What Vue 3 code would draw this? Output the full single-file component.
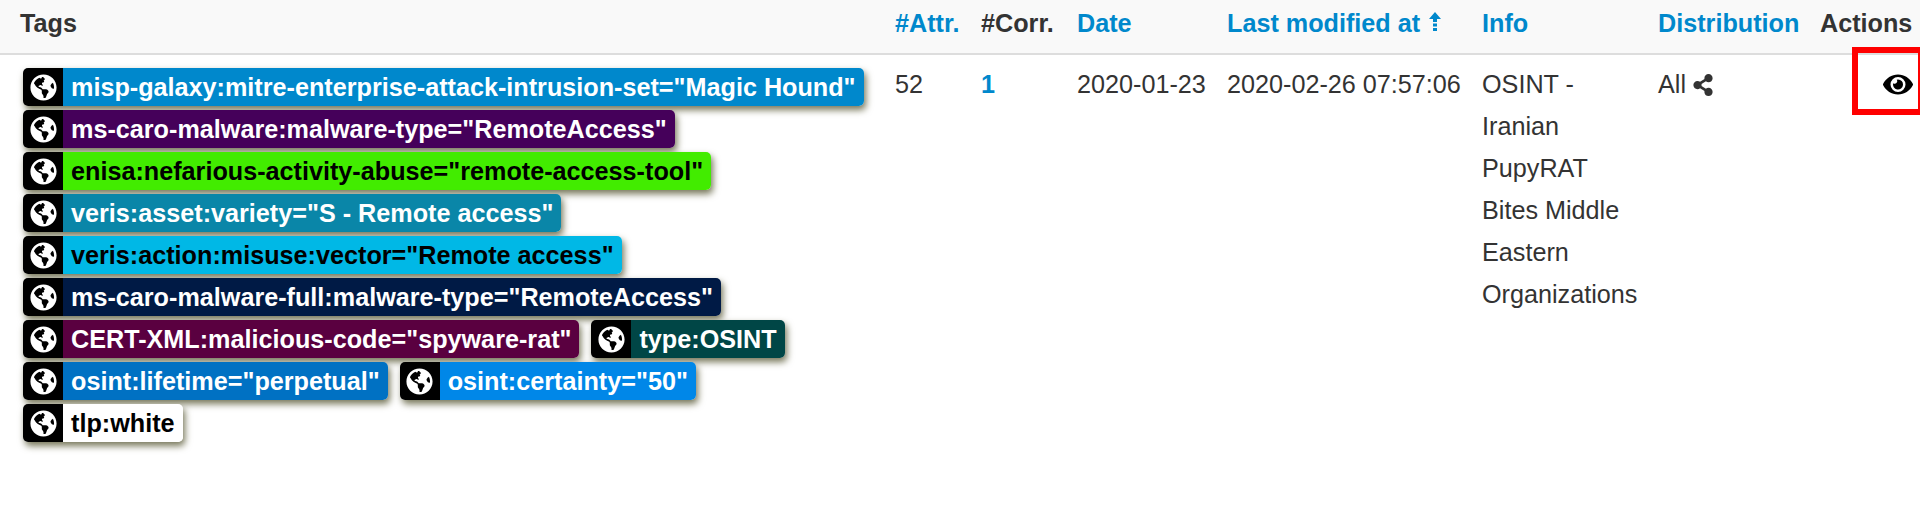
<template>
  <div class="page">
    <table class="events">
      <colgroup>
        <col class="col-tags" />
        <col class="col-attr" />
        <col class="col-corr" />
        <col class="col-date" />
        <col class="col-mod" />
        <col class="col-info" />
        <col class="col-dist" />
        <col class="col-actions" />
      </colgroup>
      <thead>
        <tr>
          <th>Tags</th>
          <th class="link">#Attr.</th>
          <th>#Corr.</th>
          <th class="link">Date</th>
          <th class="link">
            Last modified at
            <svg class="sort" viewBox="0 0 12 20"><path d="M6 0 12 7H8V10H4V7H0ZM4 11.5H8V14.5H4ZM4 16H8V19H4Z" /></svg>
          </th>
          <th class="link">Info</th>
          <th class="link">Distribution</th>
          <th>Actions</th>
        </tr>
      </thead>
      <tbody>
        <tr>
          <td class="tags-cell">
            <div v-for="(row, i) in tagRows" :key="i" class="tag-row">
              <span v-for="tag in row" :key="tag.text" class="tag">
                <span class="tag-icon">
                  <svg viewBox="0 0 496 512"><path :d="globe" /></svg>
                </span>
                <span class="tag-text" :style="{ background: tag.bg, color: tag.fg }">{{ tag.text }}</span>
              </span>
            </div>
          </td>
          <td>52</td>
          <td class="corr">1</td>
          <td>2020-01-23</td>
          <td>2020-02-26 07:57:06</td>
          <td>OSINT - Iranian PupyRAT Bites Middle Eastern Organizations</td>
          <td>
            All
            <svg class="share" viewBox="0 0 448 512"><path :d="share" /></svg>
          </td>
          <td class="actions">
            <svg class="eye" viewBox="0 0 576 512"><path :d="eye" /></svg>
          </td>
        </tr>
      </tbody>
    </table>
    <div class="highlight"></div>
  </div>
</template>

<script setup>
const globe =
  "M248 8C111.03 8 0 119.03 0 256s111.03 248 248 248 248-111.03 248-248S384.97 8 248 8zm82.29 357.6c-3.9 3.88-7.99 7.95-11.31 11.28-2.99 3-5.1 6.7-6.17 10.71-1.51 5.66-2.73 11.38-4.77 16.87l-17.39 46.85c-13.76 3-28 4.69-42.65 4.69v-27.38c1.69-12.62-7.64-36.26-22.63-51.25-6-6-9.37-14.14-9.37-22.63v-32.01c0-11.64-6.27-22.34-16.46-27.97-14.37-7.95-34.81-19.06-48.81-26.11-11.48-5.78-22.1-13.14-31.65-21.75l-.8-.72a114.792 114.792 0 0 1-18.06-20.74c-9.38-13.77-24.66-36.42-34.59-51.14 20.47-45.5 57.36-82.04 103.2-101.89l24.01 12.01C203.48 89.74 216 82.01 216 70.11v-11.3c7.99-1.29 16.12-2.11 24.39-2.42l28.3 28.3c6.25 6.25 6.25 16.38 0 22.63L264 112l-10.34 10.34c-3.12 3.12-3.12 8.19 0 11.31l4.69 4.69c3.12 3.12 3.12 8.19 0 11.31l-8 8a8.008 8.008 0 0 1-5.66 2.34h-8.99c-2.08 0-4.08.81-5.58 2.27l-9.92 9.65a8.008 8.008 0 0 0-1.58 9.31l15.59 31.19c2.66 5.32-1.21 11.58-7.15 11.58h-5.64c-1.93 0-3.79-.7-5.24-1.96l-9.28-8.06a16.017 16.017 0 0 0-15.55-3.1l-31.17 10.39a11.95 11.95 0 0 0-8.17 11.34c0 4.53 2.56 8.66 6.61 10.69l11.08 5.54c9.41 4.71 19.79 7.16 30.31 7.16s22.59 27.29 32 32h66.75c8.49 0 16.62 3.37 22.63 9.37l13.69 13.69a30.503 30.503 0 0 1 8.93 21.57 46.536 46.536 0 0 1-13.72 32.98zM417 274.25c-5.79-1.45-10.84-5-14.15-9.97l-17.98-26.97a23.97 23.97 0 0 1 0-26.62l19.59-29.38c2.32-3.47 5.5-6.29 9.24-8.15l12.98-6.49C440.2 193.59 448 223.87 448 256c0 8.67-.74 17.16-1.82 25.54L417 274.25z";
const share =
  "M352 320c-22.608 0-43.387 7.819-59.79 20.895l-102.486-64.054a96.551 96.551 0 0 0 0-41.683l102.486-64.054C308.613 184.181 329.392 192 352 192c53.019 0 96-42.981 96-96S405.019 0 352 0s-96 42.981-96 96c0 7.158.79 14.13 2.276 20.841L155.79 180.895C139.387 167.819 118.608 160 96 160c-53.019 0-96 42.981-96 96s42.981 96 96 96c22.608 0 43.387-7.819 59.79-20.895l102.486 64.054A96.301 96.301 0 0 0 256 416c0 53.019 42.981 96 96 96s96-42.981 96-96-42.981-96-96-96z";
const eye =
  "M572.52 241.4C518.29 135.59 410.93 64 288 64S57.68 135.64 3.48 241.41a32.35 32.35 0 0 0 0 29.19C57.71 376.41 165.07 448 288 448s230.32-71.64 284.52-177.41a32.35 32.35 0 0 0 0-29.19zM288 400a144 144 0 1 1 144-144 143.93 143.93 0 0 1-144 144zm0-240a95.31 95.31 0 0 0-25.31 3.79 47.85 47.85 0 0 1-66.9 66.9A95.78 95.78 0 1 0 288 160z";

const tagRows = [
  [{ text: 'misp-galaxy:mitre-enterprise-attack-intrusion-set="Magic Hound"', bg: "#0088cc", fg: "#fff" }],
  [{ text: 'ms-caro-malware:malware-type="RemoteAccess"', bg: "#45005a", fg: "#fff" }],
  [{ text: 'enisa:nefarious-activity-abuse="remote-access-tool"', bg: "#42ec00", fg: "#000" }],
  [{ text: 'veris:asset:variety="S - Remote access"', bg: "#0a86a8", fg: "#fff" }],
  [{ text: 'veris:action:misuse:vector="Remote access"', bg: "#00b8e6", fg: "#000" }],
  [{ text: 'ms-caro-malware-full:malware-type="RemoteAccess"', bg: "#001a45", fg: "#fff" }],
  [
    { text: 'CERT-XML:malicious-code="spyware-rat"', bg: "#5a0040", fg: "#fff" },
    { text: "type:OSINT", bg: "#004646", fg: "#fff" },
  ],
  [
    { text: 'osint:lifetime="perpetual"', bg: "#0071c3", fg: "#fff" },
    { text: 'osint:certainty="50"', bg: "#0087e8", fg: "#fff" },
  ],
  [{ text: "tlp:white", bg: "#ffffff", fg: "#000" }],
];
</script>

<style scoped>
.page {
  position: relative;
  height: 515px;
  background: #fff;
  font-family: "Liberation Sans", Arial, sans-serif;
  font-size: 25.2px;
  color: #333;
  overflow: hidden;
}

.events {
  width: 1920px;
  table-layout: fixed;
  border-collapse: collapse;
}

.col-tags { width: 885px; }
.col-attr { width: 86px; }
.col-corr { width: 96px; }
.col-date { width: 150px; }
.col-mod { width: 255px; }
.col-info { width: 176px; }
.col-dist { width: 162px; }
.col-actions { width: 110px; }

th {
  height: 46px;
  padding: 0 0 7px 10px;
  background: #f9f9f9;
  border-bottom: 2px solid #ddd;
  text-align: left;
  font-weight: bold;
  white-space: nowrap;
}

th:first-child { padding-left: 20px; }
th.link { color: #0088cc; }

td {
  padding: 8px 10px 0;
  vertical-align: top;
  line-height: 42px;
}

td.tags-cell {
  padding: 13px 0 0 23px;
}

.corr {
  color: #0088cc;
  font-weight: bold;
}

.sort {
  width: 12px;
  height: 20px;
  margin-left: 2px;
  vertical-align: 0;
  fill: #0088cc;
}

.tag-row {
  display: flex;
  gap: 12px;
  height: 42px;
}

.tag {
  display: flex;
  height: 38px;
  border-radius: 5px;
  box-shadow: 2px 4px 7px #77775a;
  overflow: hidden;
  font-weight: bold;
  line-height: 38px;
}

.tag-icon {
  display: flex;
  align-items: center;
  justify-content: center;
  width: 40px;
  background: #000;
}

.tag-icon svg {
  width: 27px;
  height: 27px;
  fill: #fff;
}

.tag-text {
  padding: 0 8px;
  white-space: nowrap;
}

.share {
  width: 20px;
  height: 22px;
  vertical-align: -3px;
  fill: #333;
}

.actions {
  text-align: right;
  padding-right: 7px;
}

.eye {
  width: 30px;
  height: 27px;
  vertical-align: -5px;
  fill: #000;
}

.highlight {
  position: absolute;
  left: 1852px;
  top: 47px;
  width: 68px;
  height: 68px;
  box-sizing: border-box;
  border: 6px solid #f00;
  border-right-width: 2px;
}
</style>

<style>
html, body { margin: 0; background: #fff; }
</style>
